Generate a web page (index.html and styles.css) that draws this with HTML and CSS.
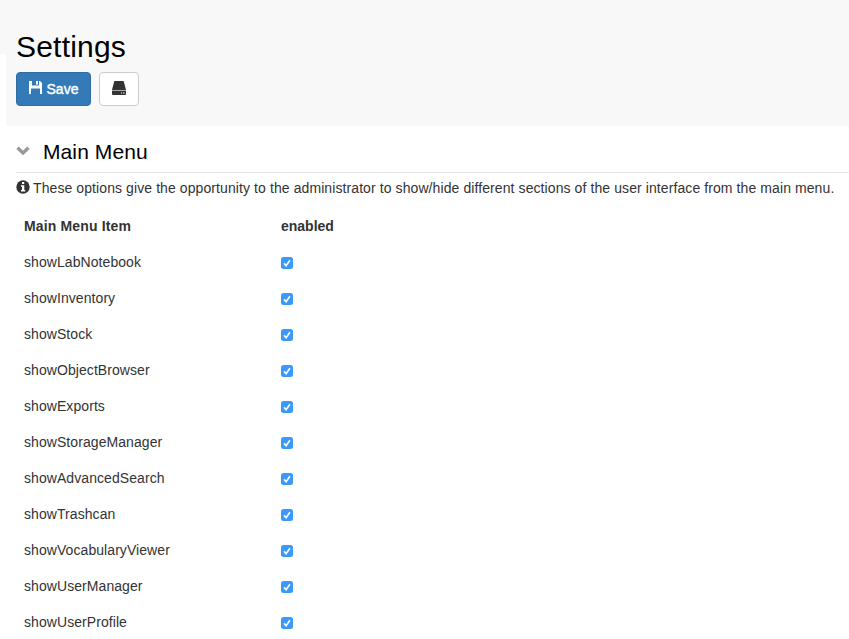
FILE: index.html
```
<!DOCTYPE html>
<html lang="en">
<head>
<meta charset="utf-8">
<title>Settings</title>
<link rel="stylesheet" href="styles.css">
</head>
<body>
<div class="topbar"></div>
<header class="header">
  <h1 class="title"><span>Settings</span></h1>
  <div class="actions">
    <button class="btn btn-primary"><svg class="icon-save" width="13" height="13" viewBox="0 0 13 13"><path fill="#fff" fill-rule="evenodd" d="M0 0h3v4.500h7V0h1l2 2v11h-2V7.500H2V13H0zM7 0h2v3.500H7z"/></svg><span class="save-text">Save</span></button>
    <button class="btn btn-default" aria-label="Storage"><svg width="14" height="14" viewBox="0 0 14 14"><path fill="#333" d="M3 0h8q.6 0 .8.600L14 9H0L2.200.600Q2.400 0 3 0z"/><path fill="#aaa" d="M0 9h14v1H0z"/><path fill="#333" fill-rule="evenodd" d="M0 10h14v3q0 1-1 1H1q-1 0-1-1zM9 11.500v1h1v-1zm2 0v1h1.500v-1z"/></svg></button>
  </div>
</header>
<main class="content">
  <div class="section-head">
    <svg class="chevron" width="14" height="10" viewBox="0 0 14 10"><path fill="none" stroke="#999" stroke-width="3.400" d="M1.500 1.800L7 7l5.500-5.200"/></svg>
    <h2 class="section-title"><span>Main Menu</span></h2>
  </div>
  <p class="info"><svg width="14" height="14" viewBox="0 0 14 14"><circle cx="7" cy="7" r="6.700" fill="#333"/><path fill="#fff" d="M6 2h2.200v2H6zM5 5.300h3.300v4.700h1v1.500H5V10h1V6.700H5z"/></svg><span class="info-text">These options give the opportunity to the administrator to show/hide different sections of the user interface from the main menu.</span></p>
  <table class="menu-table">
    <thead><tr><th class="name">Main Menu Item</th><th>enabled</th></tr></thead>
    <tbody>
      <tr><td>showLabNotebook</td><td><svg class="check" viewBox="0 0 12 12"><use href="#tick"/></svg></td></tr>
      <tr><td>showInventory</td><td><svg class="check" viewBox="0 0 12 12"><use href="#tick"/></svg></td></tr>
      <tr><td>showStock</td><td><svg class="check" viewBox="0 0 12 12"><use href="#tick"/></svg></td></tr>
      <tr><td>showObjectBrowser</td><td><svg class="check" viewBox="0 0 12 12"><use href="#tick"/></svg></td></tr>
      <tr><td>showExports</td><td><svg class="check" viewBox="0 0 12 12"><use href="#tick"/></svg></td></tr>
      <tr><td>showStorageManager</td><td><svg class="check" viewBox="0 0 12 12"><use href="#tick"/></svg></td></tr>
      <tr><td>showAdvancedSearch</td><td><svg class="check" viewBox="0 0 12 12"><use href="#tick"/></svg></td></tr>
      <tr><td>showTrashcan</td><td><svg class="check" viewBox="0 0 12 12"><use href="#tick"/></svg></td></tr>
      <tr><td>showVocabularyViewer</td><td><svg class="check" viewBox="0 0 12 12"><use href="#tick"/></svg></td></tr>
      <tr><td>showUserManager</td><td><svg class="check" viewBox="0 0 12 12"><use href="#tick"/></svg></td></tr>
      <tr><td>showUserProfile</td><td><svg class="check" viewBox="0 0 12 12"><use href="#tick"/></svg></td></tr>
    </tbody>
  </table>
</main>
<svg class="defs" width="0" height="0"><defs><g id="tick"><rect width="12" height="12" rx="2.500" fill="#3b99fc"/><path d="M3 6.400l2.100 2.400L8.900 3.200" fill="none" stroke="#fff" stroke-width="1.600"/></g></defs></svg>
</body>
</html>
```
FILE: styles.css
```
* { box-sizing: border-box; }
html, body { height: 639px; overflow: hidden; }
body {
  margin: 0;
  background: #fff;
  color: #333;
  font: 14px/20px "Liberation Sans", Arial, sans-serif;
}
svg { display: block; flex: none; }
.defs { position: absolute; }
.topbar { height: 54px; margin-bottom: -54px; background: #f8f8f8; }
.header {
  height: 126px;
  margin-left: 6px;
  padding: 30px 10px 0;
  background: #f8f8f8;
}
.title {
  margin: 0 0 9px;
  color: #000;
  font-size: 30px;
  font-weight: 400;
  line-height: 33px;
  letter-spacing: 0.2px;
}
.actions { display: flex; gap: 8px; }
.btn {
  display: flex;
  align-items: center;
  justify-content: center;
  height: 34px;
  padding: 0;
  border: 1px solid #ccc;
  border-radius: 4px;
  background: #fff;
  font: inherit;
}
.btn-primary {
  width: 75px;
  gap: 5px;
  border-color: #2e6da4;
  background: #337ab7;
  color: #fff;
}
.btn-default { width: 40px; }
.icon-save { margin-top: -3px; }
.btn-default svg { margin-top: -2px; }
.save-text { -webkit-text-stroke: 0.4px #fff; }
.content { padding-left: 16px; }
.section-head {
  display: flex;
  align-items: center;
  height: 47px;
  padding: 6px 0 0;
  border-bottom: 1px solid #e5e5e5;
}
.chevron { margin: -2px 13px 0 0; }
.section-title {
  margin: 0;
  color: #000;
  font-size: 21px;
  font-weight: 400;
  line-height: 24px;
  letter-spacing: 0.1px;
}
.info {
  display: flex;
  align-items: center;
  gap: 3px;
  height: 20px;
  margin: 5px 0 10px;
  white-space: nowrap;
}
.info svg { margin-top: -2px; }
.info-text { letter-spacing: 0.091px; }
.menu-table { border-collapse: collapse; table-layout: fixed; width: 600px; }
.menu-table th, .menu-table td {
  height: 36px;
  padding: 0 8px;
  text-align: left;
  vertical-align: middle;
}
.menu-table td { letter-spacing: 0.07px; }
.menu-table .name { width: 257px; letter-spacing: 0.15px; }
.check { width: 12px; height: 12px; margin-top: 2px; }
```
